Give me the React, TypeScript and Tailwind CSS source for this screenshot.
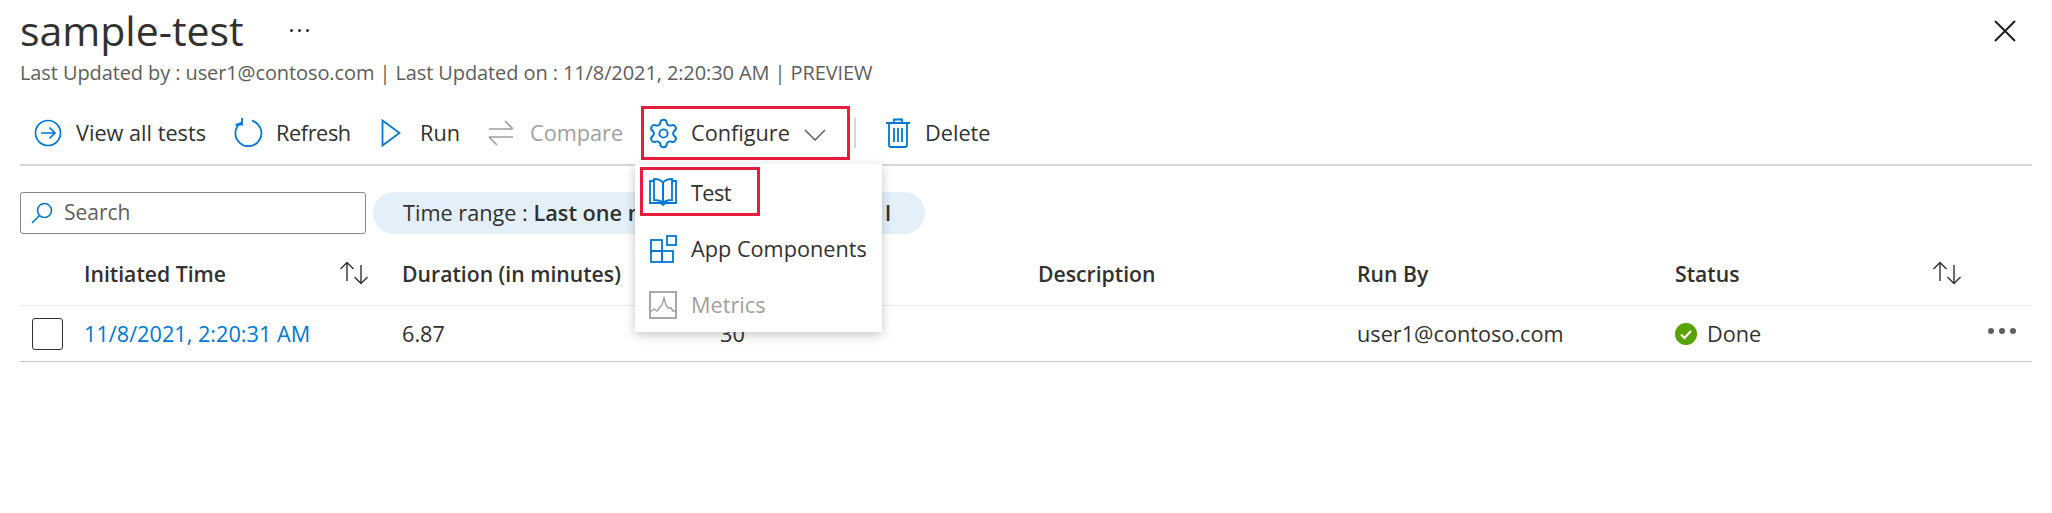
import { Settings } from "lucide-react"

const blue = "#0078d4"

function ArrowCircleIcon() {
  return (
    <svg width="28" height="28" viewBox="0 0 28 28" fill="none" stroke={blue} strokeWidth="1.7">
      <circle cx="14" cy="14" r="12.5" />
      <path d="M7 14h14M15.5 8.5 21 14l-5.5 5.5" />
    </svg>
  )
}

function RefreshIcon() {
  return (
    <svg width="30" height="30" viewBox="0 0 30 30" fill="none" stroke={blue} strokeWidth="1.8">
      <path d="M8 4.5A13 13 0 1 0 19 2.7" />
      <path d="M9 0v6.5H2.5" />
    </svg>
  )
}

function PlayIcon() {
  return (
    <svg width="20" height="28" viewBox="0 0 20 28" fill="none" stroke={blue} strokeWidth="1.8">
      <path d="M1.5 1.5v25L18.5 14z" />
    </svg>
  )
}

function CompareIcon() {
  return (
    <svg width="26" height="28" viewBox="0 0 26 28" fill="none" stroke="#a19f9d" strokeWidth="1.7">
      <path d="M1 10h23M17 2l8 8M1 18h24M9 26l-8-8" />
    </svg>
  )
}

function TrashIcon() {
  return (
    <svg width="24" height="30" viewBox="0 0 24 30" fill="none" stroke={blue} strokeWidth="1.8">
      <path d="M0 5h24M8 5V1.5h8V5M3 5v22a2 2 0 0 0 2 2h14a2 2 0 0 0 2-2V5" />
      <path d="M8 10v14M12 10v14M16 10v14" />
    </svg>
  )
}

function BookIcon() {
  return (
    <svg width="28" height="28" viewBox="0 0 28 28" fill="none" stroke={blue} strokeWidth="1.8">
      <path d="M5 3H1v22h10.5L14 27l2.5-2H27V3h-4" />
      <path d="M5 1c4 0 7 1 9 3.5V25c-2-2-5-3-9-3z" />
      <path d="M23 1c-4 0-7 1-9 3.5V25c2-2 5-3 9-3z" />
    </svg>
  )
}

function ComponentsIcon() {
  return (
    <svg width="28" height="28" viewBox="0 0 28 28" fill="none" stroke={blue} strokeWidth="1.8">
      <rect x="2" y="5" width="11" height="11" />
      <rect x="2" y="16" width="11" height="11" />
      <rect x="13" y="16" width="11" height="11" />
      <rect x="18" y="1" width="9" height="9" />
    </svg>
  )
}

function MetricsIcon() {
  return (
    <svg width="28" height="28" viewBox="0 0 28 28" fill="none" stroke="#a19f9d" strokeWidth="1.8">
      <rect x="1" y="1" width="26" height="26" />
      <path d="M1 21l4-3 3 2 3-4 2-2 2-7 2 7 2 3h3l2 3 4 0" strokeWidth="1.4" />
    </svg>
  )
}

function SearchIcon() {
  return (
    <svg width="22" height="22" viewBox="0 0 22 22" fill="none" stroke={blue} strokeWidth="1.6">
      <circle cx="13.5" cy="8.5" r="7" />
      <path d="M8.5 13.5 1 21" />
    </svg>
  )
}

function SortIcon() {
  return (
    <svg width="30" height="24" viewBox="0 0 30 24" fill="none" stroke="#323130" strokeWidth="1.4">
      <path d="M8 20V2M1.5 8 8 1.5 14.5 8" />
      <path d="M22 4v18M15.5 16l6.5 6.5 6.5-6.5" />
    </svg>
  )
}

function StatusDone() {
  return (
    <svg width="22" height="22" viewBox="0 0 22 22">
      <circle cx="11" cy="11" r="11" fill="#57a300" />
      <path d="M6 11.5l3.5 3.5L16 8" fill="none" stroke="#fff" strokeWidth="2.2" />
    </svg>
  )
}

function ToolbarItem({ icon, label, muted, className }: { icon: React.ReactNode; label: string; muted?: boolean; className?: string }) {
  return (
    <div className={`flex items-center ${className ?? ""}`}>
      {icon}
      <span className={`text-[21.7px] ${muted ? "text-[#a19f9d]" : "text-[#323130]"}`}>{label}</span>
    </div>
  )
}

export default function App() {
  return (
    <div className="relative h-[513px] w-[2052px] overflow-hidden bg-white font-['Open_Sans',sans-serif] text-[#323130]">
      <div className="px-5">
        {/* title */}
        <div className="flex h-[58px] items-center pt-[3px]">
          <h1 className="text-[41px] leading-none font-normal">sample-test</h1>
          <span className="ml-[46px] flex gap-[5px]">
            <i className="h-[3px] w-[3px] rounded-full bg-[#323130]" />
            <i className="h-[3px] w-[3px] rounded-full bg-[#323130]" />
            <i className="h-[3px] w-[3px] rounded-full bg-[#323130]" />
          </span>
          <svg width="22" height="22" viewBox="0 0 22 22" stroke="#201f1e" strokeWidth="2" className="mr-[16px] ml-auto">
            <path d="M1 1l20 20M21 1 1 21" />
          </svg>
        </div>
        <p className="mt-[1px] h-[28px] text-[20px] leading-[28px] tracking-[-0.1px] text-[#605e5c]">
          Last Updated by : user1@contoso.com | Last Updated on : 11/8/2021, 2:20:30 AM | PREVIEW
        </p>

        {/* toolbar */}
        <div className="mt-[17px] flex h-[62px] items-center border-b-2 border-[#d6d6d6] pb-[2px] pl-[14px]">
          <ToolbarItem icon={<ArrowCircleIcon />} label="View all tests" className="w-[199px] gap-[14px]" />
          <ToolbarItem icon={<RefreshIcon />} label="Refresh" className="w-[148px] gap-[13px] tracking-[-0.4px]" />
          <ToolbarItem icon={<PlayIcon />} label="Run" className="w-[107px] gap-[19px]" />
          <ToolbarItem icon={<CompareIcon />} label="Compare" muted className="w-[153px] gap-[16px]" />
          <div className="flex h-[54px] w-[209px] items-center border-[3px] border-[#e81c3c] pl-[3px]">
            <Settings size={33} color={blue} strokeWidth={1.4} />
            <span className="ml-[11px] text-[21.7px]">Configure</span>
            <svg width="22" height="12" viewBox="0 0 22 12" fill="none" stroke="#605e5c" strokeWidth="1.5" className="ml-[14px] translate-y-[2px]">
              <path d="M1 1l10 10L21 1" />
            </svg>
          </div>
          <div className="ml-[4px] h-[30px] w-[2px] bg-[#d6d6d6]" />
          <ToolbarItem icon={<TrashIcon />} label="Delete" className="ml-[30px] gap-[15px]" />
        </div>

        {/* filters */}
        <div className="mt-[26px] flex h-[42px] gap-[7px]">
          <div className="flex w-[346px] items-center gap-[11px] rounded-[3px] border border-[#8a8886] pl-[10px]">
            <SearchIcon />
            <span className="text-[21px] text-[#605e5c]">Search</span>
          </div>
          <div className="flex w-[552px] items-center justify-between overflow-hidden rounded-full bg-[#e3f0fa] pr-[34px] pl-[30px] text-[21.7px] whitespace-nowrap">
            <span>
              Time range :&nbsp;<b className="font-semibold">Last one m</b>
            </span>
            <b className="font-semibold">l</b>
          </div>
        </div>

        {/* table */}
        <div className="mt-[17px] text-[21.7px]">
          <div className="grid h-[55px] grid-cols-[64px_318px_318px_318px_319px_318px_1fr] items-center border-b border-[#edebe9] pb-[9px] text-[21.2px] font-semibold">
            <div />
            <div className="flex items-center justify-between pr-[33px]">
              <span>Initiated Time</span>
              <SortIcon />
            </div>
            <div>Duration (in minutes)</div>
            <div />
            <div>Description</div>
            <div>Run By</div>
            <div className="flex items-center justify-between pr-[70px]">
              <span>Status</span>
              <SortIcon />
            </div>
          </div>
          <div className="grid h-[56px] grid-cols-[64px_318px_318px_318px_319px_318px_1fr] items-center border-b border-[#c8c6c4] pt-[1px]">
            <div className="pl-[12px]">
              <div className="h-[32px] w-[31px] rounded-[3px] border border-[#323130]" />
            </div>
            <div className="text-[#0078d4]">11/8/2021, 2:20:31 AM</div>
            <div>6.87</div>
            <div>30</div>
            <div />
            <div>user1@contoso.com</div>
            <div className="flex items-center pr-[16px]">
              <StatusDone />
              <span className="ml-[10px]">Done</span>
              <span className="mb-[6px] ml-auto flex gap-[5px]">
                <i className="h-[6px] w-[6px] rounded-full bg-[#605e5c]" />
                <i className="h-[6px] w-[6px] rounded-full bg-[#605e5c]" />
                <i className="h-[6px] w-[6px] rounded-full bg-[#605e5c]" />
              </span>
            </div>
          </div>
        </div>
      </div>

      {/* configure menu */}
      <div className="absolute top-[164px] left-[635px] h-[168px] w-[247px] bg-white pt-[3px] pl-[5px] text-[21.7px] shadow-[0_3px_10px_rgba(0,0,0,0.22)]">
        <div className="flex h-[49px] w-[120px] items-center gap-[14px] border-[3px] border-[#e81c3c] pl-[6px]">
          <BookIcon />
          <span className="pt-[3px] tracking-[-0.6px]">Test</span>
        </div>
        <div className="mt-[10px] flex h-[46px] items-center gap-[14px] pl-[9px]">
          <ComponentsIcon />
          <span>App Components</span>
        </div>
        <div className="mt-[10px] flex h-[46px] items-center gap-[14px] pl-[9px] text-[#a19f9d]">
          <MetricsIcon />
          <span className="pt-[1px]">Metrics</span>
        </div>
      </div>
    </div>
  )
}
